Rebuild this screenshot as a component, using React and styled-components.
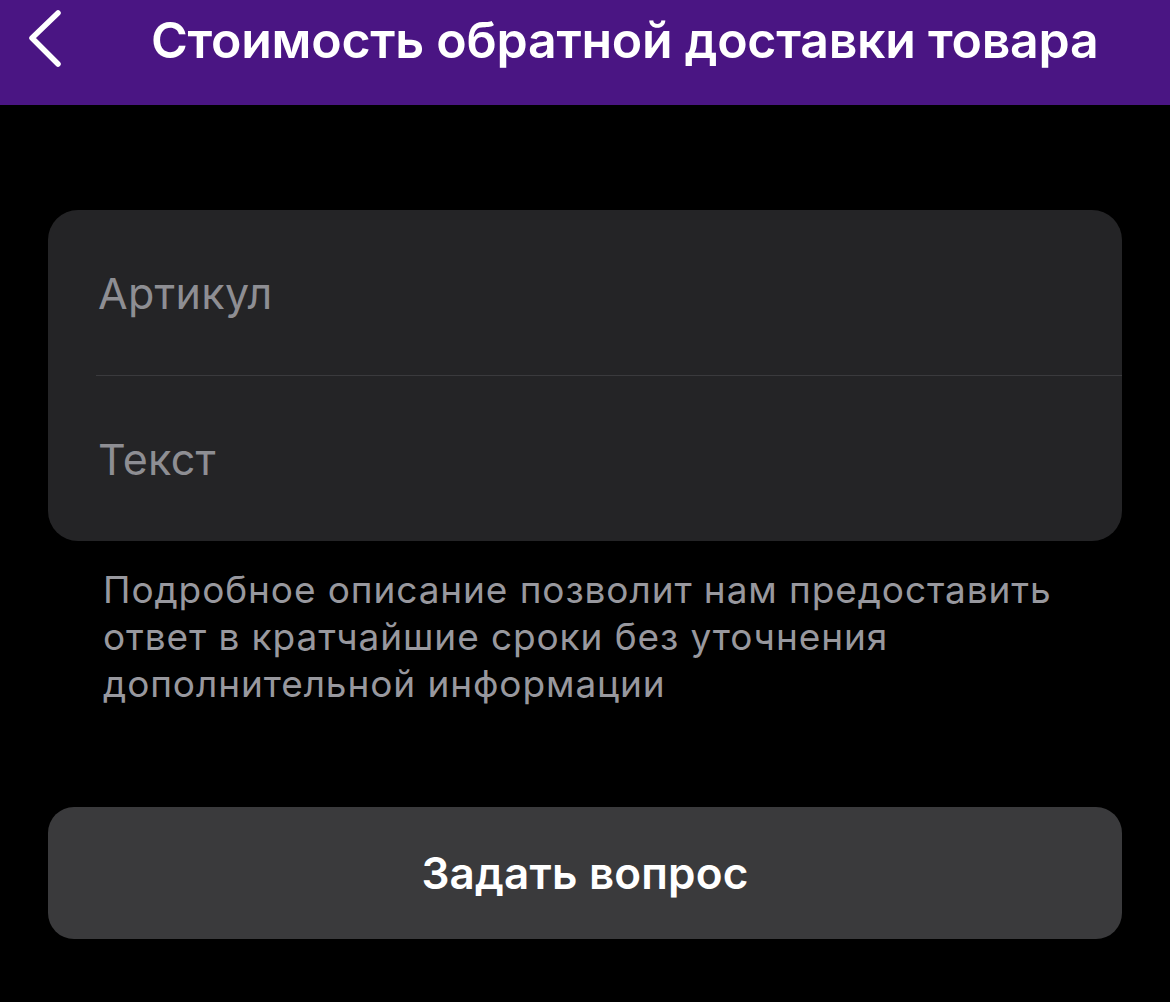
import styled, { createGlobalStyle } from 'styled-components'

const Global = createGlobalStyle`
  html, body {
    margin: 0;
    padding: 0;
    background: #000;
  }
  body {
    font-family: Inter, "Noto Sans", "Liberation Sans", sans-serif;
    -webkit-font-smoothing: antialiased;
  }
`

const Page = styled.div`
  width: 1170px;
  height: 1002px;
  background: #000;
  overflow: hidden;
`

const Header = styled.header`
  height: 105px;
  background: #4a1583;
  display: flex;
  align-items: flex-start;
  padding: 0 0 0 24px;
  box-sizing: border-box;
`

const BackButton = styled.button`
  width: 44px;
  height: 62px;
  margin-top: 8px;
  padding: 0;
  border: 0;
  background: none;
  display: flex;
  align-items: center;
  justify-content: center;
`

const Title = styled.h1`
  margin: 10px 0 0 83px;
  font-size: 50px;
  font-weight: 600;
  line-height: 60px;
  color: #fff;
  letter-spacing: -0.25px;
  white-space: nowrap;
`

const Content = styled.main`
  padding: 105px 48px 0 48px;
  display: flex;
  flex-direction: column;
`

const Card = styled.div`
  background: #242426;
  border-radius: 30px;
  overflow: hidden;
`

const Field = styled.div`
  height: ${p => p.$h}px;
  display: flex;
  align-items: center;
  padding-left: 50px;
  font-size: 43px;
  color: #8e8e93;
  letter-spacing: 0.3px;
`

const Divider = styled.div`
  height: 1px;
  margin-left: 48px;
  background: #3a3a3d;
`

const Hint = styled.p`
  margin: 25px 0 0 55px;
  font-size: 37px;
  line-height: 47px;
  color: #98989e;
  letter-spacing: 0.9px;
  max-width: 1000px;
`

const AskButton = styled.button`
  margin-top: 100px;
  height: 132px;
  border: 0;
  border-radius: 26px;
  background: #3a3a3c;
  color: #fff;
  font-family: inherit;
  font-size: 44px;
  font-weight: 600;
  letter-spacing: 0.2px;
`

function ChevronLeft() {
  return (
    <svg width="44" height="62" viewBox="0 0 44 62" fill="none">
      <path d="M34 5 L8 30 L34 56" stroke="#fff" strokeWidth="5.5" strokeLinecap="round" strokeLinejoin="round" />
    </svg>
  )
}

function App() {
  return (
    <Page>
      <Global />
      <Header>
        <BackButton>
          <ChevronLeft />
        </BackButton>
        <Title>Стоимость обратной доставки товара</Title>
      </Header>
      <Content>
        <Card>
          <Field $h={165}>Артикул</Field>
          <Divider />
          <Field $h={165}>Текст</Field>
        </Card>
        <Hint>
          Подробное описание позволит нам предоставить ответ в кратчайшие сроки без уточнения дополнительной информации
        </Hint>
        <AskButton>Задать вопрос</AskButton>
      </Content>
    </Page>
  )
}

export default App
